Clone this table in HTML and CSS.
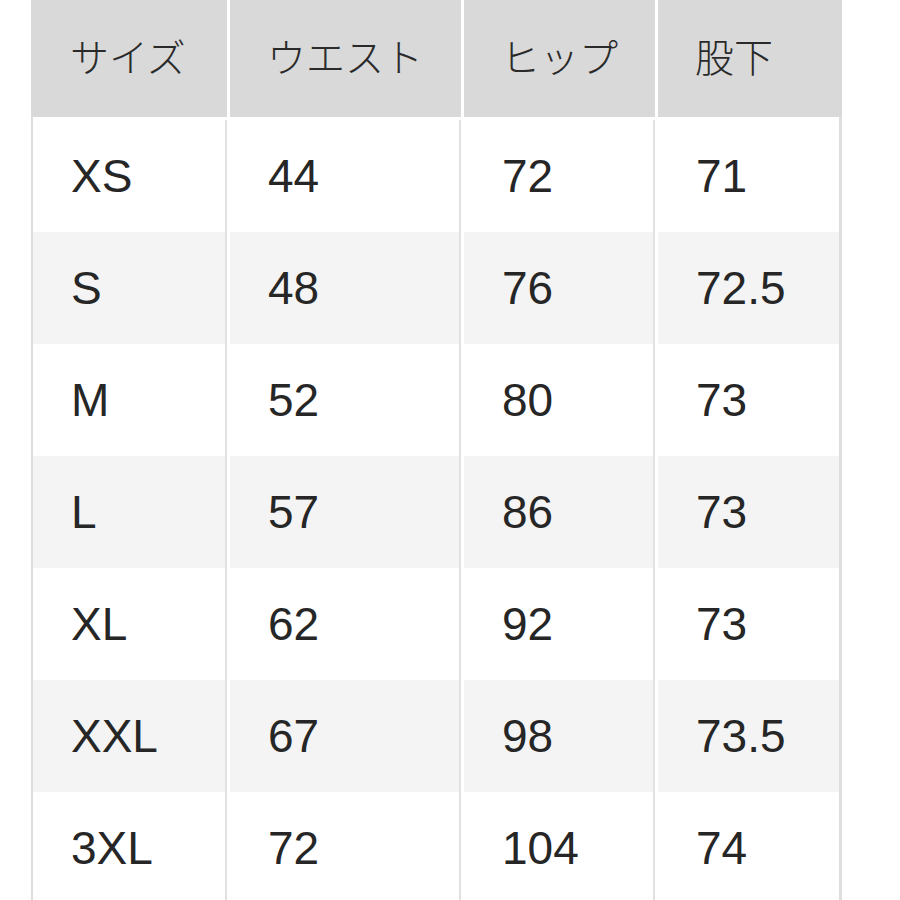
FILE: index.html
```html
<!DOCTYPE html>
<html lang="ja">
<head>
<meta charset="utf-8">
<title>サイズ表</title>
<link rel="stylesheet" href="styles.css">
</head>
<body>
<div class="chart">
  <div class="row head">
    <div class="cell">サイズ</div>
    <div class="cell">ウエスト</div>
    <div class="cell">ヒップ</div>
    <div class="cell">股下</div>
  </div>
  <div class="row">
    <div class="cell">XS</div><div class="cell">44</div><div class="cell">72</div><div class="cell">71</div>
  </div>
  <div class="row alt">
    <div class="cell">S</div><div class="cell">48</div><div class="cell">76</div><div class="cell">72.5</div>
  </div>
  <div class="row">
    <div class="cell">M</div><div class="cell">52</div><div class="cell">80</div><div class="cell">73</div>
  </div>
  <div class="row alt">
    <div class="cell">L</div><div class="cell">57</div><div class="cell">86</div><div class="cell">73</div>
  </div>
  <div class="row">
    <div class="cell">XL</div><div class="cell">62</div><div class="cell">92</div><div class="cell">73</div>
  </div>
  <div class="row alt">
    <div class="cell">XXL</div><div class="cell">67</div><div class="cell">98</div><div class="cell">73.5</div>
  </div>
  <div class="row">
    <div class="cell">3XL</div><div class="cell">72</div><div class="cell">104</div><div class="cell">74</div>
  </div>
</div>
</body>
</html>
```

FILE: styles.css
```css
html, body {
  margin: 0;
  padding: 0;
  background: #ffffff;
  height: 900px;
  overflow: hidden;
}

.chart {
  margin-left: 31px;
  width: 811px;
  box-sizing: border-box;
  border-left: 2px solid #dedede;
  border-right: 3px solid #dedede;
  display: flex;
  flex-direction: column;
  font-family: "Liberation Sans", "Noto Sans CJK JP", sans-serif;
  color: #262626;
}

.row {
  display: grid;
  grid-template-columns: 194px 231px 191px 181px;
  column-gap: 3px;
  height: 112px;
  background: #ffffff;
}

.cell {
  display: flex;
  align-items: center;
  padding-left: 38px;
  font-size: 46px;
  line-height: 1;
  border-right: 2px solid #e1e1e1;
  background: #ffffff;
}

.cell:last-child {
  border-right: none;
}

.row.alt .cell {
  background: #f4f4f4;
}

.row.head {
  height: 117px;
  margin-bottom: 3px;
  margin-left: -2px;
  grid-template-columns: 196px 231px 191px 184px;
  margin-right: -3px;
}

.row.head .cell {
  background: #d9d9d9;
  border-right-color: #d9d9d9;
  font-family: "Noto Sans CJK JP", sans-serif;
  font-weight: 300;
  font-size: 39px;
  color: #2a2a2a;
  padding-left: 37px;
  padding-bottom: 6px;
  box-sizing: border-box;
}

.row.head .cell:first-child {
  padding-left: 39px;
}
```
